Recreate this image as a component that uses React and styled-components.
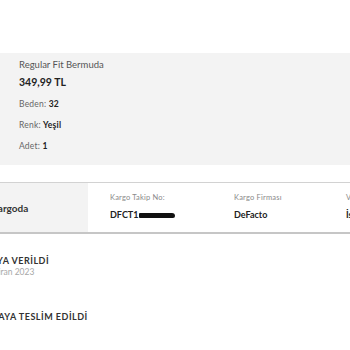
import styled, { createGlobalStyle } from "styled-components";

const GlobalStyle = createGlobalStyle`
    html, body {
        margin: 0;
        padding: 0;
        background: #ffffff;
        overflow: hidden;
    }
    body {
        font-family: Lato, "Open Sans", sans-serif;
        color: #333333;
    }
`;

const Viewport = styled.div`
    width: 350px;
    height: 350px;
    overflow: hidden;
`;

// the screenshot shows a horizontally scrolled order page, so the page is wider than the window
const Page = styled.div`
    width: 520px;
    margin-left: -60px;
    padding-top: 53px;
`;

const ProductPanel = styled.section`
    background-color: #f3f3f3;
    height: 112px;
    box-sizing: border-box;
    padding: 6px 0 0 79px;
`;

const ProductName = styled.div`
    font-size: 9.5px;
    line-height: 12px;
    color: #555555;
`;

const Price = styled.div`
    margin-top: 5px;
    font-size: 10.5px;
    line-height: 12px;
    font-weight: 700;
    color: #222222;
    margin-bottom: 11px;
`;

const Detail = styled.div`
    font-size: 8.5px;
    line-height: 11px;
    letter-spacing: 0.2px;
    color: #666666;
    margin-top: 10px;

    b {
        color: #222222;
        font-weight: 700;
    }
`;

const ShipRow = styled.div`
    display: flex;
    margin-top: 17px;
    height: 52px;
    box-sizing: border-box;
    border-top: 1px solid #d2d2d2;
    border-bottom: 2px solid #c6c6c6;
`;

const StatusCell = styled.div`
    width: 148px;
    background-color: #f3f3f3;
    display: flex;
    align-items: center;
    padding-left: 51px;
    box-sizing: border-box;
    font-size: 10px;
    font-weight: 700;
    color: #333333;
`;

const InfoCell = styled.div`
    width: ${(props) => props.width}px;
    padding: 10px 0 0 22px;
    box-sizing: border-box;
`;

const InfoLabel = styled.div`
    font-size: 7.5px;
    line-height: 9px;
    letter-spacing: 0.2px;
    color: #8a8a8a;
`;

const InfoValue = styled.div`
    margin-top: 8px;
    font-size: 9px;
    line-height: 10px;
    font-weight: 700;
    color: #222222;
    display: flex;
    align-items: center;
`;

const Redacted = styled.span`
    display: inline-block;
    width: 36px;
    height: 5px;
    background: #111111;
    border-radius: 1px 3px 2px 1px;
    margin-left: 1px;
`;

const Timeline = styled.div`
    padding-top: 21px;
    padding-left: 23px;
`;

const Step = styled.div`
    margin-bottom: ${(props) => props.gap}px;
`;

const StepTitle = styled.div`
    font-size: 9px;
    line-height: 12px;
    font-weight: 700;
    color: #333333;
    letter-spacing: 0.5px;
`;

const StepDate = styled.div`
    margin-left: 9px;
    font-size: 8.5px;
    line-height: 11px;
    color: #a8a8a8;
`;

const App = () => {
    return (
        <>
            <GlobalStyle />
            <Viewport>
                <Page>
                    <ProductPanel>
                        <ProductName>Regular Fit Bermuda</ProductName>
                        <Price>349,99 TL</Price>
                        <Detail>Beden: <b>32</b></Detail>
                        <Detail>Renk: <b>Yeşil</b></Detail>
                        <Detail>Adet: <b>1</b></Detail>
                    </ProductPanel>
                    <ShipRow>
                        <StatusCell>Kargoda</StatusCell>
                        <InfoCell width={124}>
                            <InfoLabel>Kargo Takip No:</InfoLabel>
                            <InfoValue>DFCT1<Redacted /></InfoValue>
                        </InfoCell>
                        <InfoCell width={112}>
                            <InfoLabel>Kargo Firması</InfoLabel>
                            <InfoValue>DeFacto</InfoValue>
                        </InfoCell>
                        <InfoCell width={120}>
                            <InfoLabel>Varış Tarihi</InfoLabel>
                            <InfoValue>İstanbul</InfoValue>
                        </InfoCell>
                    </ShipRow>
                    <Timeline>
                        <Step gap={33}>
                            <StepTitle>KARGOYA VERİLDİ</StepTitle>
                            <StepDate>17 Haziran 2023</StepDate>
                        </Step>
                        <Step gap={0}>
                            <StepTitle>MAĞAZAYA TESLİM EDİLDİ</StepTitle>
                        </Step>
                    </Timeline>
                </Page>
            </Viewport>
        </>
    );
};

export default App;
